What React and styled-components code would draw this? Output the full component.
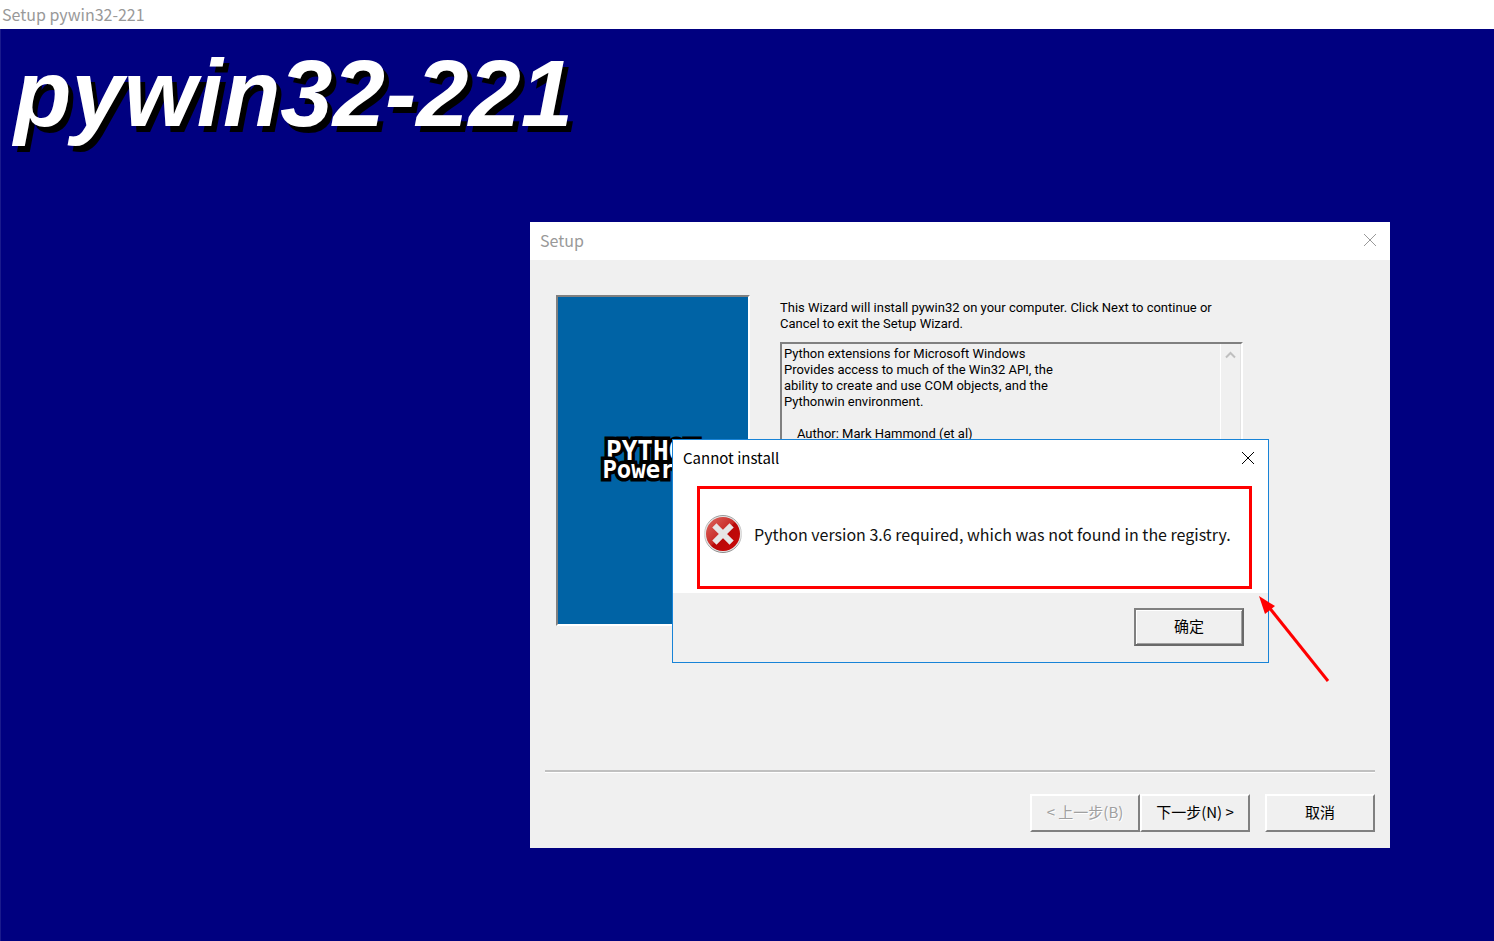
import React from 'react';
import styled, {createGlobalStyle} from 'styled-components';

const GlobalStyle = createGlobalStyle`
    * {
        box-sizing: border-box;
    }
    body {
        margin: 0;
        background-color: #000080;
        font-family: "Noto Sans CJK SC", "Noto Sans", sans-serif;
        color: #000;
    }
`;

const Screen = styled.div`
    display: flex;
    flex-direction: column;
    min-height: 100vh;
`;

const ScreenTitle = styled.header`
    height: 29px;
    padding-left: 2px;
    background-color: #fff;
    color: #999;
    font-size: 16px;
    line-height: 28px;
`;

const Desktop = styled.main`
    position: relative;
    flex: 1;
    overflow: hidden;
    background-color: #000080;
    border-left: 1px solid #1a1a8c;
`;

const Banner = styled.h1`
    margin: 0;
    padding: 11px 13px;
    color: #fff;
    font-family: "Liberation Sans", Arial, sans-serif;
    font-size: 94px;
    font-style: italic;
    font-weight: bold;
    line-height: 108px;
    text-shadow: 5px 6px 0 #000;
`;

const SetupWindow = styled.section`
    position: absolute;
    top: 193px;
    left: 529px;
    display: flex;
    flex-direction: column;
    width: 860px;
    background-color: #f0f0f0;
`;

const TitleBar = styled.div`
    display: flex;
    align-items: center;
    justify-content: space-between;
    height: 38px;
    padding: 0 10px 2px;
    background-color: #fff;
    color: ${props => (props.$active ? '#000' : '#999')};
    font-size: ${props => (props.$active ? '15px' : '16px')};
    line-height: 24px;
`;

const CloseButton = styled.button`
    display: flex;
    align-items: center;
    justify-content: center;
    width: 20px;
    height: 20px;
    padding: 0;
    border: 0;
    background: none;
    color: inherit;
`;

const SetupContent = styled.div`
    display: flex;
    gap: 30px;
    height: 510px;
    padding: 35px 26px 0;
`;

const SidePicture = styled.div`
    display: flex;
    flex-direction: column;
    align-items: center;
    justify-content: center;
    width: 194px;
    height: 331px;
    border: 2px solid;
    border-color: #808080 #fff #fff #808080;
    background-color: #0063a5;
`;

const PowerLine = styled.span`
    color: #fff;
    font-family: "DejaVu Sans Mono", monospace;
    font-size: ${props => props.$size};
    font-weight: bold;
    line-height: 19px;
    -webkit-text-stroke: 7px #000;
    paint-order: stroke fill;
`;

const Info = styled.div`
    width: 463px;
    font-family: Roboto, "Liberation Sans", sans-serif;
    font-size: 13px;
    line-height: 16px;
`;

const Intro = styled.p`
    margin: 0;
    padding: 5px 0 10px;
`;

const Description = styled.div`
    display: flex;
    justify-content: space-between;
    height: 230px;
    border: 2px solid;
    border-color: #808080 #fff #fff #808080;
`;

const DescriptionText = styled.pre`
    margin: 0;
    padding: 2px;
    font: inherit;
`;

const ScrollBar = styled.div`
    width: 21px;
    padding: 7px 4px;
    border-left: 1px solid #fff;
    border-right: 1px solid #e3e3e3;
    line-height: 0;
`;

const ButtonRow = styled.footer`
    display: flex;
    justify-content: flex-end;
    margin: 0 15px;
    padding: 22px 0 16px;
    border-top: 2px solid #c0c0c0;
    box-shadow: inset 0 1px 0 #fff;
`;

const Button = styled.button`
    width: 110px;
    height: 38px;
    margin-left: ${props => (props.$apart ? '15px' : '0')};
    padding: 0 0 2px;
    border: 2px solid;
    border-color: #fff #808080 #808080 #fff;
    background-color: #f0f0f0;
    color: #000;
    font-family: "Noto Sans CJK SC", sans-serif;
    font-size: 15px;
    line-height: 24px;
    &:disabled {
        color: #a0a0a0;
        text-shadow: 1px 1px 0 #fff;
    }
`;

const OkButton = styled(Button)`
    border-color: #808080 #696969 #696969 #808080;
    box-shadow: inset 1px 1px 0 #fff, inset -1px -1px 0 #a0a0a0;
`;

const Dialog = styled.section`
    position: absolute;
    top: 410px;
    left: 671px;
    width: 597px;
    border: 1px solid #1883d7;
    background-color: #fff;
`;

const Message = styled.div`
    display: flex;
    align-items: center;
    gap: 11px;
    height: 103px;
    margin: 8px 16px 4px 24px;
    padding: 0 3px 8px;
    border: 3px solid #f00;
    color: #111;
    font-size: 16px;
    white-space: nowrap;
`;

const DialogFooter = styled.div`
    display: flex;
    justify-content: flex-end;
    padding: 15px 24px 16px;
    background-color: #f0f0f0;
`;

const Arrow = styled.svg`
    position: absolute;
    top: 563px;
    left: 1253px;
`;

const CloseIcon = () => (
    <svg width="14" height="14" viewBox="0 0 14 14" fill="none" stroke="currentColor">
        <path d="M1 1l12 12M13 1L1 13" />
    </svg>
);

const ErrorIcon = () => (
    <svg width="40" height="40" viewBox="0 0 40 40">
        <defs>
            <linearGradient id="ball" x1="0" y1="0" x2="1" y2="1">
                <stop offset="0" stopColor="#dd6a62" />
                <stop offset="0.480" stopColor="#c92a26" />
                <stop offset="0.520" stopColor="#b80808" />
                <stop offset="1" stopColor="#cc0808" />
            </linearGradient>
            <linearGradient id="rim" x1="0" y1="0" x2="0" y2="1">
                <stop offset="0" stopColor="#999" />
                <stop offset="0.500" stopColor="#ddd" />
                <stop offset="1" stopColor="#888" />
            </linearGradient>
        </defs>
        <circle cx="20" cy="20" r="18.5" fill="#e6e6e6" stroke="url(#rim)" />
        <circle cx="20" cy="20" r="17" fill="url(#ball)" />
        <path d="M13.500 13.500l13 13M26.500 13.500l-13 13" stroke="#e6e6e6" strokeWidth="6" strokeLinecap="square" />
    </svg>
);

const description = `Python extensions for Microsoft Windows
Provides access to much of the Win32 API, the
ability to create and use COM objects, and the
Pythonwin environment.

    Author: Mark Hammond (et al)`;

const App = () => (
    <Screen>
        <GlobalStyle />
        <ScreenTitle>Setup pywin32-221</ScreenTitle>
        <Desktop>
            <Banner>pywin32-221</Banner>
            <SetupWindow>
                <TitleBar>
                    <span>Setup</span>
                    <CloseButton aria-label="Close"><CloseIcon /></CloseButton>
                </TitleBar>
                <SetupContent>
                    <SidePicture>
                        <PowerLine $size="26px">PYTHON</PowerLine>
                        <PowerLine $size="24px">Powered</PowerLine>
                    </SidePicture>
                    <Info>
                        <Intro>
                            This Wizard will install pywin32 on your computer. Click Next to continue or Cancel to exit the Setup Wizard.
                        </Intro>
                        <Description>
                            <DescriptionText>{description}</DescriptionText>
                            <ScrollBar>
                                <svg width="11" height="8" viewBox="0 0 11 8" fill="none" stroke="#bfbfbf" strokeWidth="2">
                                    <path d="M1 6.500l4.500-4.500L10 6.500" />
                                </svg>
                            </ScrollBar>
                        </Description>
                    </Info>
                </SetupContent>
                <ButtonRow>
                    <Button disabled>&lt; 上一步(B)</Button>
                    <Button>下一步(N) &gt;</Button>
                    <Button $apart>取消</Button>
                </ButtonRow>
            </SetupWindow>
            <Dialog role="alertdialog">
                <TitleBar $active>
                    <span>Cannot install</span>
                    <CloseButton aria-label="Close"><CloseIcon /></CloseButton>
                </TitleBar>
                <Message>
                    <ErrorIcon />
                    <span>Python version 3.6 required, which was not found in the registry.</span>
                </Message>
                <DialogFooter>
                    <OkButton>确定</OkButton>
                </DialogFooter>
            </Dialog>
            <Arrow width="80" height="95" viewBox="0 0 80 95">
                <path d="M14 14L74 89" stroke="#f00" strokeWidth="3" />
                <path d="M5 4l16 10-10 8z" fill="#f00" />
            </Arrow>
        </Desktop>
    </Screen>
);

export default App;
